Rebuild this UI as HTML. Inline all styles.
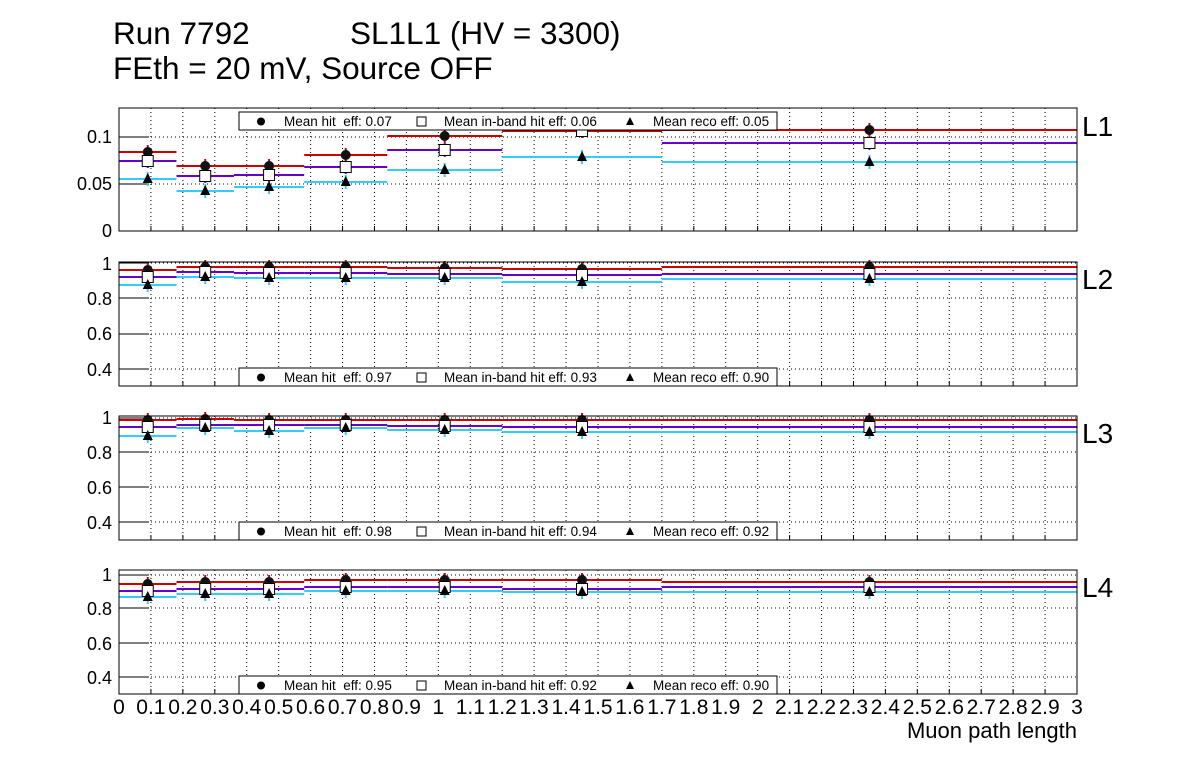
<!DOCTYPE html>
<html><head><meta charset="utf-8"><style>
html,body{margin:0;padding:0;background:#fff;}
svg{display:block;font-family:"Liberation Sans",Arial,sans-serif;}
</style></head><body>
<svg id="s" width="1196" height="772" viewBox="0 0 1196 772" xmlns="http://www.w3.org/2000/svg">
<rect width="1196" height="772" fill="#fff"/>
<g id="g"></g>
<text x="113" y="44" font-size="31.5">Run 7792</text>
<text x="350" y="44" font-size="31.5">SL1L1 (HV = 3300)</text>
<text x="113" y="79" font-size="31.5">FEth = 20 mV, Source OFF</text>
<g font-size="28">
<text x="1082" y="136">L1</text>
<text x="1082" y="289">L2</text>
<text x="1082" y="443">L3</text>
<text x="1082" y="597">L4</text>
</g>
<g font-size="18" text-anchor="end">
<text x="112" y="143">0.1</text><text x="112" y="190">0.05</text><text x="112" y="237">0</text>
<text x="112" y="270">1</text><text x="112" y="305">0.8</text><text x="112" y="340">0.6</text><text x="112" y="376">0.4</text>
<text x="112" y="424">1</text><text x="112" y="459">0.8</text><text x="112" y="494">0.6</text><text x="112" y="529">0.4</text>
<text x="112" y="581">1</text><text x="112" y="615">0.8</text><text x="112" y="650">0.6</text><text x="112" y="684">0.4</text>
</g>
<g font-size="21" text-anchor="middle">
<text x="119" y="714">0</text><text x="150.9" y="714">0.1</text><text x="182.9" y="714">0.2</text><text x="214.8" y="714">0.3</text><text x="246.7" y="714">0.4</text><text x="278.7" y="714">0.5</text><text x="310.6" y="714">0.6</text><text x="342.5" y="714">0.7</text><text x="374.5" y="714">0.8</text><text x="406.4" y="714">0.9</text><text x="438.3" y="714">1</text><text x="470.3" y="714">1.1</text><text x="502.2" y="714">1.2</text><text x="534.1" y="714">1.3</text><text x="566.1" y="714">1.4</text><text x="598" y="714">1.5</text><text x="629.9" y="714">1.6</text><text x="661.9" y="714">1.7</text><text x="693.8" y="714">1.8</text><text x="725.7" y="714">1.9</text><text x="757.7" y="714">2</text><text x="789.6" y="714">2.1</text><text x="821.5" y="714">2.2</text><text x="853.5" y="714">2.3</text><text x="885.4" y="714">2.4</text><text x="917.3" y="714">2.5</text><text x="949.3" y="714">2.6</text><text x="981.2" y="714">2.7</text><text x="1013.1" y="714">2.8</text><text x="1045.1" y="714">2.9</text><text x="1077" y="714">3</text>
</g>
<text x="1077" y="738" font-size="22" text-anchor="end">Muon path length</text>
<g id="leg" font-size="13"></g>
<g font-size="13.5">
<text x="284" y="126">Mean hit&#160; eff: 0.07</text><text x="444" y="126">Mean in-band hit eff: 0.06</text><text x="653" y="126">Mean reco eff: 0.05</text>
<text x="284" y="382">Mean hit&#160; eff: 0.97</text><text x="444" y="382">Mean in-band hit eff: 0.93</text><text x="653" y="382">Mean reco eff: 0.90</text>
<text x="284" y="536">Mean hit&#160; eff: 0.98</text><text x="444" y="536">Mean in-band hit eff: 0.94</text><text x="653" y="536">Mean reco eff: 0.92</text>
<text x="284" y="690">Mean hit&#160; eff: 0.95</text><text x="444" y="690">Mean in-band hit eff: 0.92</text><text x="653" y="690">Mean reco eff: 0.90</text>
</g>
</svg>
<script>
var NS="http://www.w3.org/2000/svg",g=document.getElementById('g');
function el(t,a){var e=document.createElementNS(NS,t);for(var k in a)e.setAttribute(k,a[k]);g.appendChild(e);return e;}
var X0=119,X1=1077,W=(X1-X0)/30;
var panels=[
 {t:108,b:231,grid:[137,184],red:[152,166,166,155,136,131,130],pur:[161,176,175,167,150,131,143],cy:[179,191,187,182,170,157,162]},
 {t:262,b:386,grid:[263,298,334,369],red:[270,267,267,267,268,269,267],pur:[277,272,273,273,274,275,274],cy:[285,277,278,278,278,282,279]},
 {t:416,b:540,grid:[418,452,487,522],red:[420,419,420,420,420,420,420],pur:[427,425,425,425,426,427,427],cy:[436,428,431,428,430,432,432]},
 {t:570,b:694,grid:[575,608,643,677],red:[584,582,582,580,580,580,582],pur:[591,589,589,587,587,589,587],cy:[597,594,594,591,591,592,592]}
];
var edges=[0,0.18,0.36,0.58,0.84,1.2,1.7,3],cent=[0.09,0.27,0.47,0.71,1.02,1.45,2.35];
function xp(v){return X0+v*(X1-X0)/3;}
panels.forEach(function(p){
 for(var k=1;k<30;k++){var x=X0+k*W;el('line',{x1:x,y1:p.t,x2:x,y2:p.b,stroke:'#000','stroke-width':1,'stroke-dasharray':'1,3'});
  el('line',{x1:x,y1:p.b,x2:x,y2:p.b-5,stroke:'#000','stroke-width':1});}
 p.grid.forEach(function(y){el('line',{x1:X0,y1:y,x2:X1,y2:y,stroke:'#000','stroke-width':1,'stroke-dasharray':'1,3'});
  el('line',{x1:X0,y1:y,x2:X0+30,y2:y,stroke:'#000','stroke-width':1});});
 [['cy','#33ccff'],['pur','#6600cc'],['red','#cc0000']].forEach(function(c){
  for(var i=0;i<7;i++){el('line',{x1:xp(edges[i]),y1:p[c[0]][i],x2:xp(edges[i+1]),y2:p[c[0]][i],stroke:c[1],'stroke-width':2});
   el('line',{x1:xp(cent[i]),y1:p[c[0]][i]-7,x2:xp(cent[i]),y2:p[c[0]][i]+7,stroke:c[1],'stroke-width':2});}
 });
 for(var i=0;i<7;i++){var x=xp(cent[i]);
  el('circle',{cx:x,cy:p.red[i],r:5,fill:'#111'});
  el('rect',{x:x-5.5,y:p.pur[i]-5.5,width:11,height:11,fill:'#fff',stroke:'#000','stroke-width':1});
  var y=p.cy[i];el('polygon',{points:(x-5)+','+(y+4)+' '+(x+5)+','+(y+4)+' '+x+','+(y-6),fill:'#000'});}
 el('rect',{x:X0,y:p.t,width:X1-X0,height:p.b-p.t,fill:'none',stroke:'#000','stroke-width':1});
});
[[112,130],[368,386],[522,540],[676,694]].forEach(function(l){
 el('rect',{x:239,y:l[0],width:538,height:l[1]-l[0],fill:'#fff',stroke:'#000','stroke-width':1});
 var m=(l[0]+l[1])/2;
 el('circle',{cx:261,cy:m+0.5,r:4,fill:'#000'});
 el('rect',{x:417,y:m-4,width:9,height:9,fill:'#fff',stroke:'#000','stroke-width':1});
 el('polygon',{points:'626,'+(m+4)+' 634,'+(m+4)+' 630,'+(m-4),fill:'#000'});
});
</script>
</body></html>
